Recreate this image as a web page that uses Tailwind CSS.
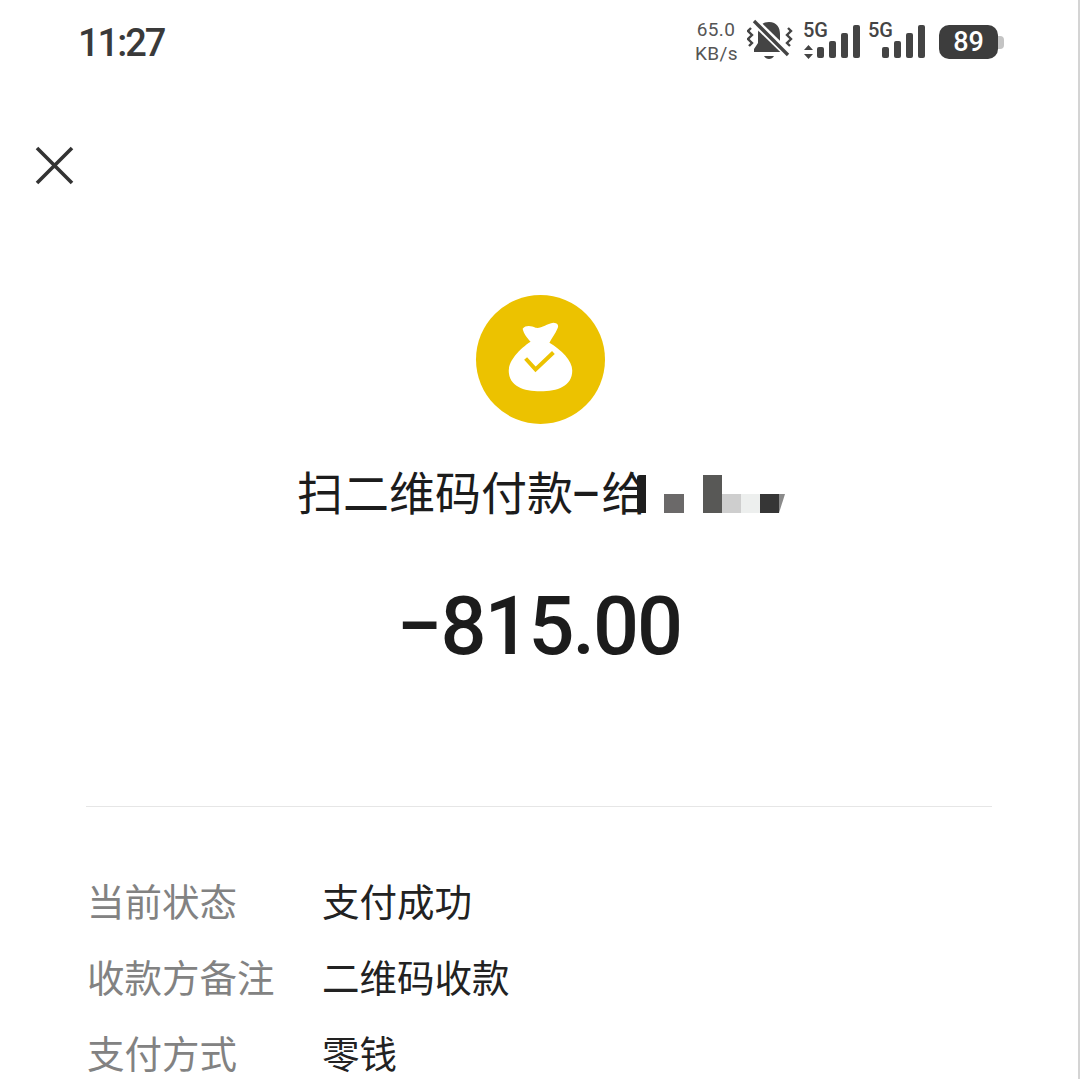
<!DOCTYPE html>
<html lang="zh-CN">
<head>
    <meta charset="UTF-8">
    <title>账单详情</title>
    <script src="https://cdn.jsdelivr.net/npm/@tailwindcss/browser@4"></script>
</head>
<body class="bg-white">
    <div class="w-[1080px] h-[1079px] overflow-hidden bg-white border-r-2 border-[#d4d4d4] font-['Roboto','Noto_Sans_CJK_SC',sans-serif]">
        <!-- status bar -->
        <header class="h-[85px] flex items-start justify-between pl-[78px] pr-[74px]">
            <span class="mt-[20px] text-[38px] leading-[46px] font-medium tracking-[-2px] text-[#3a3a3a]">11:27</span>
            <div class="mt-[18px] flex items-start text-[#444]">
                <div class="w-[42px] text-center text-[19px] leading-[24px] tracking-[0.4px] text-[#555]">
                    <div>65.0</div>
                    <div>KB/s</div>
                </div>
                <svg class="ml-[10px] mt-[1px]" width="46" height="42" viewBox="0 0 46 42" fill="none">
                    <path d="M22 3c-8 0-11 6-11 12v9l-4 6v3h30v-3l-4-6v-9c0-6-3-12-11-12z" fill="#444"/>
                    <path d="M17 37h10c-1 2-3 3-5 3s-4-1-5-3z" fill="#444"/>
                    <path d="M6 1l37 36" stroke="#fff" stroke-width="8"/>
                    <path d="M7 2l34 34" stroke="#444" stroke-width="3.4"/>
                    <path d="M4 9l-3 3 4 4-4 4 4 4-3 3M41 9l3 3-4 4 4 4-4 4 3 3" stroke="#444" stroke-width="2.4"/>
                </svg>
                <div class="ml-[10px] relative w-[57px] h-[34px] mt-[7px]">
                    <span class="absolute left-0 -top-[5px] text-[20px] leading-[20px] font-medium text-[#444]">5G</span>
                    <svg class="absolute left-0 top-0" width="57" height="34" viewBox="0 0 57 34" fill="#444">
                        <path d="M5.500 20l4.500 5H1zM5.500 34L1 29h9z"/>
                        <rect x="14" y="22" width="7" height="11" rx="2"/>
                        <rect x="26" y="16" width="7" height="17" rx="2"/>
                        <rect x="38" y="8" width="7" height="25" rx="2"/>
                        <rect x="50" y="0" width="7" height="33" rx="2"/>
                    </svg>
                </div>
                <div class="ml-[8px] relative w-[57px] h-[34px] mt-[7px]">
                    <span class="absolute left-0 -top-[5px] text-[20px] leading-[20px] font-medium text-[#444]">5G</span>
                    <svg class="absolute left-0 top-0" width="57" height="34" viewBox="0 0 57 34" fill="#444">
                        <rect x="14" y="22" width="7" height="11" rx="2"/>
                        <rect x="26" y="16" width="7" height="17" rx="2"/>
                        <rect x="38" y="8" width="7" height="25" rx="2"/>
                        <rect x="50" y="0" width="7" height="33" rx="2"/>
                    </svg>
                </div>
                <div class="ml-[14px] mt-[7px] flex items-center">
                    <div class="w-[59px] h-[34px] rounded-[10px] bg-[#3d3d3d] text-white text-[27px] font-medium leading-[34px] text-center">89</div>
                    <div class="w-[6px] h-[13px] rounded-r-[4px] bg-[#c4c4c4]"></div>
                </div>
            </div>
        </header>

        <!-- close -->
        <div class="mt-[61px] ml-[35px]">
            <svg class="block" width="39" height="39" viewBox="0 0 39 39" fill="none" stroke="#333" stroke-width="3.6">
                <path d="M2 2l35 35M37 2L2 37"/>
            </svg>
        </div>

        <!-- icon -->
        <div class="mt-[110px] pl-[2px] flex justify-center">
            <div class="w-[129px] h-[129px] rounded-full bg-[#ecc200]">
                <svg class="block" width="129" height="129" viewBox="0 0 130 130">
                    <path d="M55 47C52 44 48 39 47 34 50 30 56 31 60 33 66 34 71 29 78 28 82 28 84 31 82 34 80 39 76 44 74 48 86 55 97 66 97 76 97 92 82 97 65 97 48 97 33 92 33 76 33 66 44 54 55 47z" fill="#fff"/>
                    <path d="M50 64l10 11 18-17" fill="none" stroke="#ecc200" stroke-width="4"/>
                </svg>
            </div>
        </div>

        <!-- title -->
        <div class="mt-[31px] h-[78px] pl-[297px] flex items-center text-[46px] leading-[78px] text-[#1c1c1c] whitespace-nowrap">
            <span>扫二维码付款</span>
            <span class="-ml-[2px] mr-[1px] font-medium">–</span>
            <span>给</span>
        </div>

        <!-- amount -->
        <div class="mt-[44px] h-[100px] flex justify-center">
            <span class="text-[81px] leading-[100px] font-medium tracking-[-2px] text-[#1c1c1c]">−815.00</span>
        </div>

        <div class="mt-[129px] mx-[86px] border-t border-[#e6e6e6]"></div>

        <!-- details -->
        <dl class="mt-[68px] pl-[87px] flex flex-col gap-[20px] text-[37.5px] leading-[56px]">
            <div class="flex"><dt class="w-[235px] text-[#828282]">当前状态</dt><dd class="text-[#222]">支付成功</dd></div>
            <div class="flex"><dt class="w-[235px] text-[#828282]">收款方备注</dt><dd class="text-[#222]">二维码收款</dd></div>
            <div class="flex"><dt class="w-[235px] text-[#828282]">支付方式</dt><dd class="text-[#222]">零钱</dd></div>
        </dl>
    </div>

    <!-- mosaic over the payee name -->
    <div class="absolute left-[637px] top-[475px] h-[38px] flex items-end">
        <div class="w-[9px] h-[38px] rounded-l-[3px] bg-[#1e1e1e]"></div>
        <div class="ml-[18px] w-[20px] h-[19px] bg-[#6b6969]"></div>
        <div class="ml-[19px] w-[19px] h-[38px] bg-[#585856]"></div>
        <div class="w-[19px] h-[19px] bg-[#cecece]"></div>
        <div class="w-[19px] h-[19px] bg-[#edefee]"></div>
        <div class="w-[19px] h-[19px] bg-[#363636]"></div>
        <div class="w-[6px] h-[19px] bg-[#8a8a8a] [clip-path:polygon(0_0,100%_0,0_100%)]"></div>
    </div>
</body>
</html>
